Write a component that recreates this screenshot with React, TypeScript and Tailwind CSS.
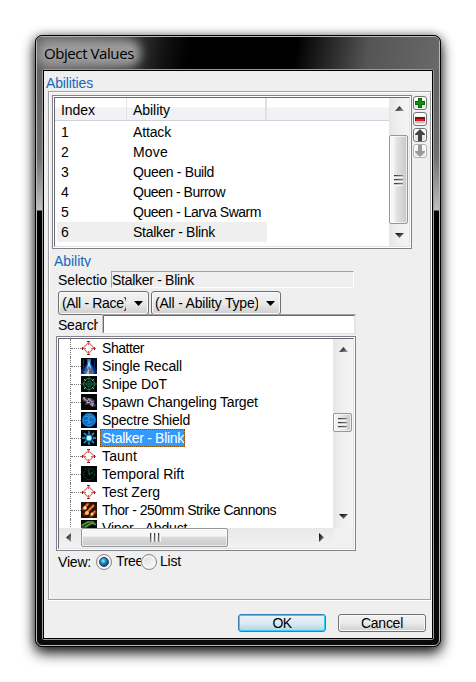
import React from "react";
import clsx from "clsx";

const measureContext = document.createElement("canvas").getContext("2d");

/* Text tracked so that it spans the given width, as GDI-hinted text does. */
function T({ children, w, className = "" }: { children: string; w: number; className?: string }) {
  let spacing = 0;
  if (measureContext) {
    measureContext.font = '14px "Liberation Sans", Arial, sans-serif';
    spacing = (w - measureContext.measureText(children).width) / children.length;
  }
  return (
    <span className={clsx("block whitespace-pre", className)} style={{ letterSpacing: `${spacing.toFixed(3)}px` }}>
      {children}
    </span>
  );
}

function Arrow({ dir }: { dir: "up" | "down" | "right" | "left" }) {
  const d = {
    up: "M4.5 0 9 5H0Z",
    down: "M0 0H9L4.5 5Z",
    right: "M0 0 5 4.5 0 9Z",
    left: "M5 0V9L0 4.5Z",
  }[dir];
  const vertical = dir === "up" || dir === "down";
  return (
    <svg width={vertical ? 9 : 5} height={vertical ? 5 : 9} className="block shrink-0">
      <defs>
        <linearGradient id={`arrow-${dir}`} x1="0" y1="0" x2="1" y2="1">
          <stop offset="0.2" stopColor="#151515" />
          <stop offset="1" stopColor="#a5a5a5" />
        </linearGradient>
      </defs>
      <path d={d} fill={`url(#arrow-${dir})`} />
    </svg>
  );
}

function Grip({ vertical }: { vertical?: boolean }) {
  return (
    <div className={clsx("flex gap-[2px]", vertical ? "flex-row" : "flex-col")}>
      {[0, 1, 2].map((i) => (
        <div
          key={i}
          className={
            vertical
              ? "h-[9px] w-[2px] border-r border-[#c8c8c8] bg-linear-to-b from-[#333] to-[#888] shadow-[1px_0_0_#f8f8f8]"
              : "h-[2px] w-[9px] border-b border-[#c8c8c8] bg-linear-to-r from-[#333] to-[#888] shadow-[0_1px_0_#f8f8f8]"
          }
        />
      ))}
    </div>
  );
}

function SideButton({ kind }: { kind: "add" | "remove" | "up" | "down" }) {
  const faded = kind === "down";
  return (
    <div
      className={clsx(
        "flex size-[14px] items-center justify-center rounded-[3px] border bg-linear-to-b from-white to-[#dcdcdc] shadow-[inset_0_0_0_1px_#fff]",
        faded ? "border-[#b0b0b0]" : "border-[#747474]",
      )}
    >
      <svg width="12" height="12" viewBox="0 0 12 12" className="block shrink-0">
        {kind === "add" && (
          <>
            <path d="M4 1H8V4H11V8H8V11H4V8H1V4H4Z" fill="#08660b" />
            <path d="M5 2H7V5H10V7H7V10H5V7H2V5H5Z" fill="#0c920c" />
          </>
        )}
        {kind === "remove" && (
          <>
            <path d="M1 4H11V8H1Z" fill="#7c1010" />
            <path d="M2 6H10V8H2Z" fill="#f01414" />
            <path d="M1 8H11V10H1Z" fill="#c4c4c4" />
          </>
        )}
        {kind === "up" && <path d="M6 0 11 5V6H8V12H4V6H1V5Z" fill="#444" />}
        {kind === "down" && <path d="M4 0H8V6H11V7L6 12 1 7V6H4Z" fill="#999" />}
      </svg>
    </div>
  );
}

function TreeIcon({ kind }: { kind: string }) {
  return (
    <svg width="16" height="16" viewBox="0 0 16 16" className="block shrink-0">
      {kind !== "target" && <rect width="16" height="16" fill="#030508" />}
      {kind === "target" && (
        <g fill="none">
          <path d="M7.5 2.500 13 8 7.500 13.500 2 8Z" stroke="#c98585" strokeWidth="1.200" />
          <path d="M0 8.500H5M10 8.500H15M7.500 1V5M7.500 11V15" stroke="#e06060" />
          <path d="M6 1.500H9M6 14.500H9M1.500 7V10M13.500 7V10" stroke="#b01010" />
        </g>
      )}
      {kind === "recall" && (
        <>
          <path d="M0 16V12L6 6 8 0 10 6 16 12V16Z" fill="#08245c" />
          <path d="M2 15 6 6V1H10V6L14 15Z" fill="#1764c8" />
          <path d="M6 11 8 1 10 11Z" fill="#9fdcff" />
          <path d="M3 16 8 8 13 16Z" fill="#5d6772" />
          <path d="M5 16 8 10V16Z" fill="#b8b8b0" />
          <path d="M2.500 2V11M13.500 2V11" stroke="#0a2f78" />
        </>
      )}
      {kind === "snipe" && (
        <g fill="none" stroke="#1f8b50">
          <circle cx="8" cy="8" r="5.500" />
          <circle cx="8" cy="8" r="2.800" stroke="#1d5c3c" />
          <path d="M8 0V16M0 8H16" stroke="#25633f" />
          <path d="M3 3 5 5M13 3 11 5M3 13 5 11M13 13 11 11" stroke="#4fc888" />
        </g>
      )}
      {kind === "spawn" && (
        <>
          <path d="M1 4 4 3 7 5 10 4 14 7 13 9 15 12 11 13 8 10 4 11 5 8 2 7Z" fill="#554765" />
          <path d="M3 5 7 7 6 9 9 8M8 6 12 8M9 10 12 12M10 9 13 10" stroke="#b9a6bb" />
          <path d="M2 4H4M7 5H9M11 11H12" stroke="#efd9df" />
        </>
      )}
      {kind === "shield" && (
        <>
          <circle cx="8" cy="8" r="7.200" fill="#0756a2" />
          <circle cx="8" cy="8" r="6" fill="#096ac0" stroke="#2c9ee4" strokeWidth=".8" />
          <path d="M4 5 6 4 8 6 11 4 12 7M4 9 7 8 9 11 12 9M6 12 8 11M8 3V12" stroke="#3fa5dd" strokeWidth=".8" fill="none" />
        </>
      )}
      {kind === "blink" && (
        <>
          <circle cx="8" cy="8" r="5" fill="#07304f" />
          <path d="M8 1V4M8 12V15M1 8H4M12 8H15M3 3 5 5M11 11 13 13M13 3 11 5M3 13 5 11" stroke="#3ba3dc" strokeWidth="1.300" />
          <circle cx="8" cy="8" r="3.200" fill="#2ba0e0" />
          <circle cx="8" cy="8" r="2.200" fill="#d5faff" />
        </>
      )}
      {kind === "rift" && (
        <g fill="none">
          <circle cx="8" cy="8" r="5.500" stroke="#0b5523" strokeDasharray="2 1" />
          <path d="M8 3.500V8.500L12 6.500" stroke="#14702f" />
        </g>
      )}
      {kind === "thor" && (
        <>
          <rect width="16" height="16" fill="#291006" />
          <path d="M1 8 8 1M3 13 13 3M9 15 15 9" stroke="#8f3511" strokeWidth="3" />
          <path d="M3 6 7 2M6 10 13 3M10 13 14 9" stroke="#e98536" strokeWidth="1.500" />
          <circle cx="4" cy="6" r="1.700" fill="#ffe2a0" />
          <circle cx="6" cy="11" r="2" fill="#ffbd68" />
          <circle cx="11" cy="12" r="1.500" fill="#ffd385" />
        </>
      )}
      {kind === "viper" && (
        <>
          <path d="M0 5 6 1 14 2 16 4 10 5 4 9 0 9Z" fill="#254e1c" />
          <path d="M1 5 7 2H13M4 7 11 3 15 5" stroke="#77af4b" fill="none" />
        </>
      )}
    </svg>
  );
}

const abilities: [string, string, number][] = [
  ["1", "Attack", 38],
  ["2", "Move", 35],
  ["3", "Queen - Build", 81],
  ["4", "Queen - Burrow", 92],
  ["5", "Queen - Larva Swarm", 128],
  ["6", "Stalker - Blink", 82],
];

const tree: [string, string, number][] = [
  ["target", "Shatter", 42],
  ["recall", "Single Recall", 80],
  ["snipe", "Snipe DoT", 65],
  ["spawn", "Spawn Changeling Target", 156],
  ["shield", "Spectre Shield", 88],
  ["blink", "Stalker - Blink", 82],
  ["target", "Taunt", 35],
  ["rift", "Temporal Rift", 82],
  ["target", "Test Zerg", 58],
  ["thor", "Thor - 250mm Strike Cannons", 174],
  ["viper", "Viper - Abduct", 86],
];

function AbilityList() {
  return (
    <div className="h-[154px] w-[360px] shrink-0 border border-[#82828c] bg-white p-px">
      <div className="flex h-full border-t border-r border-b border-l border-t-[#696974] border-r-[#e3e3e3] border-b-[#e3e3e3] border-l-[#696974]">
        <div className="flex w-[334px] flex-col">
          <div className="flex h-[23px] shrink-0 border-b border-[#d0d2d6] bg-linear-to-b from-white from-40% to-[#f1f2f5] to-45% leading-[25px]">
            <div className="w-[72px] border-r border-[#e2e3e6] pl-[6px]"><T w={34}>Index</T></div>
            <div className="w-[140px] border-r-2 border-[#e0e1e4] pl-[6px]"><T w={37}>Ability</T></div>
          </div>
          <div className="mt-px pl-[2px]">
            {abilities.map(([index, name, width]) => (
              <div key={index} className={clsx("flex h-5 w-[210px] pl-1 leading-5", index === "6" && "bg-[#efefef]")}>
                <T w={8} className="w-[72px] shrink-0">{index}</T>
                <T w={width}>{name}</T>
              </div>
            ))}
          </div>
        </div>
        <div className="flex w-[20px] flex-col items-center bg-linear-to-r from-[#e6e6e6] via-[#f0f0f0] to-[#f4f4f4]">
          <div className="flex h-[37px] w-full justify-center pt-[8px]"><Arrow dir="up" /></div>
          <div className="flex h-[89px] w-[19px] items-center justify-center self-start rounded-[2px] border border-[#979797] bg-linear-to-r from-[#f6f6f6] from-20% via-[#e2e2e4] via-40% to-[#c6c7c9] shadow-[inset_0_0_0_1px_#ffffffa0]"><Grip /></div>
          <div className="pt-[9px]"><Arrow dir="down" /></div>
        </div>
      </div>
    </div>
  );
}

function Combo({ text, textWidth, width, clip }: { text: string; textWidth: number; width: string; clip: string }) {
  return (
    <div className={clsx("flex h-6 items-center justify-between rounded-[3px] border border-[#707070] bg-linear-to-b from-[#f2f2f2] from-0% via-[#ebebeb] via-48% to-[#cfcfcf] pr-[5px] pl-[3px] shadow-[inset_0_0_0_1px_#fafafa]", width)}>
      <div className={clsx("overflow-hidden leading-[22px]", clip)}><T w={textWidth}>{text}</T></div>
      <svg width="9" height="5" className="block"><path d="M0 0H9L4.500 5Z" fill="#000" /></svg>
    </div>
  );
}

function AbilityTree() {
  return (
    <div className="h-[215px] w-[300px] border border-[#82828c] bg-white p-px">
      <div className="flex h-full flex-col border border-t-[#696974] border-r-[#e3e3e3] border-b-[#e3e3e3] border-l-[#696974]">
        <div className="flex h-[189px] shrink-0">
          <div className="w-[274px] overflow-hidden">
            {tree.map(([kind, name, width]) => (
              <div key={name} className="flex h-[18px] items-center">
                <div className="ml-[11px] flex h-[18px] w-[11px] shrink-0 items-center border-l border-dotted border-[#777]">
                  <div className="h-px w-full border-t border-dotted border-[#777]" />
                </div>
                <TreeIcon kind={kind} />
                <div
                  className={clsx(
                    "ml-[3px] h-[18px] pl-[2px] leading-[18px]",
                    name === "Stalker - Blink" && "w-[85px] bg-[#3399ff] text-white outline-1 -outline-offset-1 outline-dotted outline-[#8a4a00]",
                  )}
                >
                  <T w={width}>{name}</T>
                </div>
              </div>
            ))}
          </div>
          <div className="flex w-5 flex-col items-center bg-linear-to-r from-[#e6e6e6] via-[#f0f0f0] to-[#f4f4f4]">
            <div className="h-[74px] pt-[8px]"><Arrow dir="up" /></div>
            <div className="flex h-[19px] w-[19px] shrink-0 items-center justify-center self-start rounded-[2px] border border-[#979797] bg-linear-to-r from-[#f6f6f6] via-[#e2e2e4] to-[#c6c7c9] shadow-[inset_0_0_0_1px_#ffffffa0]"><Grip /></div>
            <div className="pt-[82px]"><Arrow dir="down" /></div>
          </div>
        </div>
        <div className="flex min-h-0 flex-1 bg-[#f0f0f0]">
          <div className="flex w-[274px] bg-linear-to-b from-[#e8e8e8] to-[#f2f2f2]">
            <div className="w-[22px] pt-[5px] pl-[7px]"><Arrow dir="left" /></div>
            <div className="flex h-[19px] w-[147px] items-center justify-center rounded-[2px] border border-[#979797] bg-linear-to-b from-[#f6f6f6] from-40% via-[#d9dadc] via-50% to-[#c9cacc] shadow-[inset_0_0_0_1px_#ffffffa0]"><Grip vertical /></div>
            <div className="pt-[5px] pl-[91px]"><Arrow dir="right" /></div>
          </div>
        </div>
      </div>
    </div>
  );
}

function Radio({ checked }: { checked?: boolean }) {
  return (
    <div className="flex size-4 shrink-0 items-center justify-center rounded-full border border-[#858585] bg-linear-to-br from-[#d7d9da] to-white shadow-[inset_0_0_0_2px_#f5f5f5]">
      {checked && <div className="size-[10px] rounded-full border border-[#173d5b] bg-[radial-gradient(circle_at_40%_35%,#8ee6ff,#147cb5_45%,#082e4d)]" />}
    </div>
  );
}

export default function App() {
  return (
    <main className="h-[682px] w-[476px] overflow-hidden bg-white pt-[35px] pl-[35px] font-['Liberation_Sans',Arial,sans-serif] text-[14px] text-black">
      <div className="h-[612px] w-[406px] rounded-[7px] border border-black bg-black shadow-[0_6px_14px_0_rgba(0,0,0,0.9),0_0_10px_0_rgba(0,0,0,0.35)]">
        <div className="h-[610px] rounded-[6px] border border-[#b9b9b9] bg-[linear-gradient(to_bottom,#666_0,#666_60px,#707070_120px,#c0c0c0_173px,#000_174px,#0b0b0b_100%)]">
          <div className="flex h-8 items-center overflow-hidden rounded-t-[5px] bg-[linear-gradient(100deg,#686868_0,#4a4a4a_20%,#111_32%,#000_38%,#000_64%,#555_82%,#696969_100%)]">
            <div className="ml-[7px] flex h-[14px] items-center rounded-[6px] bg-[#999] font-['Open_Sans','Noto_Sans',sans-serif] text-[15px] leading-[14px] tracking-[-0.42px] whitespace-nowrap shadow-[0_0_10px_7px_#999]">
              Object Values
            </div>
          </div>
          <div className="mx-[5px] h-[571px] rounded-[2px] border border-[#9a9a9a]">
            <div className="flex h-[569px] flex-col border border-black bg-[#efefef]">
              <div className="h-5 pl-[2px] leading-[25px] text-[#1467bd]"><T w={47}>Abilities</T></div>
              <div className="ml-1 h-[509px] w-[383px] border border-[#a0a0a0] pt-[3px] pl-[3px] shadow-[inset_1px_1px_0_#fff,1px_1px_0_#fff]">
                <div className="flex gap-px">
                  <AbilityList />
                  <div className="flex flex-col gap-[2px] pt-px">
                    <SideButton kind="add" />
                    <SideButton kind="remove" />
                    <SideButton kind="up" />
                    <SideButton kind="down" />
                  </div>
                </div>
                <div className="mt-[5px] ml-[2px] h-[13px] overflow-hidden leading-[15px] text-[#1467bd]"><T w={37}>Ability</T></div>
                <div className="mt-[4px] ml-[6px] flex h-[17px] leading-[18px]">
                  <div className="w-[53px]"><T w={49}>Selectio</T></div>
                  <div className="w-[243px] border border-t-[#a0a0a0] border-r-white border-b-white border-l-[#a0a0a0] leading-[16px]"><T w={82}>Stalker - Blink</T></div>
                </div>
                <div className="mt-[3px] ml-[6px] flex gap-[2px]">
                  <Combo text="(All - Race)" textWidth={66} width="w-[91px]" clip="w-[64px]" />
                  <Combo text="(All - Ability Type)" textWidth={105} width="w-[130px]" clip="w-[103px]" />
                </div>
                <div className="-mt-px ml-[6px] flex h-5">
                  <div className="mr-1 w-10 overflow-hidden leading-[22px]"><T w={43}>Search</T></div>
                  <div className="w-[254px] border border-t-[#a0a0a0] border-r-[#e3e3e9] border-b-[#e3e3e9] border-l-[#c4c4c4] bg-white">
                    <div className="h-full border border-t-[#696974] border-r-[#e3e3e9] border-b-white border-l-[#696974]" />
                  </div>
                </div>
                <div className="mt-[2px] ml-1"><AbilityTree /></div>
                <div className="mt-[2px] ml-[6px] flex h-[17px] items-center leading-[17px]">
                  <div className="w-[38px] pt-[2px]"><T w={33}>View:</T></div>
                  <Radio checked />
                  <div className="ml-1 w-[25px] overflow-hidden"><T w={27}>Tree</T></div>
                  <Radio />
                  <div className="ml-[3px]"><T w={21}>List</T></div>
                </div>
              </div>
              <div className="mt-[14px] flex h-[18px] gap-3 pl-[194px] text-center leading-[17px]">
                <button className="flex w-[88px] justify-center rounded-[3px] border border-[#3c7fb1] bg-linear-to-b from-[#e8f4f9] from-0% via-[#dcecf3] via-48% to-[#b4d2e0] shadow-[inset_0_0_0_1px_#30cfff]"><T w={19}>OK</T></button>
                <button className="flex w-[88px] justify-center rounded-[3px] border border-[#707070] bg-linear-to-b from-[#f2f2f2] from-0% via-[#ebebeb] via-48% to-[#cfcfcf] shadow-[inset_0_0_0_1px_#fafafa]"><T w={42}>Cancel</T></button>
              </div>
            </div>
          </div>
        </div>
      </div>
    </main>
  );
}
